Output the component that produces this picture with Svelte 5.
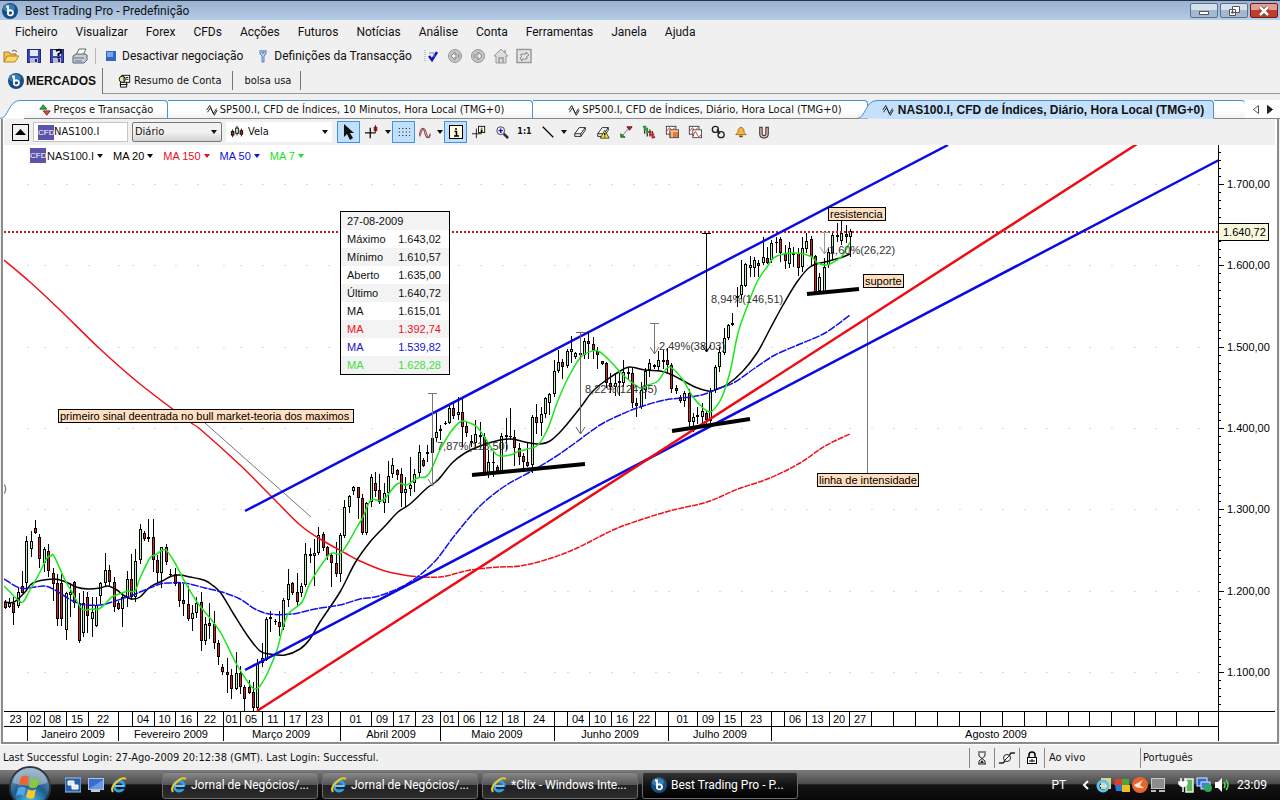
<script lang="ts">
	const menus = ['Ficheiro', 'Visualizar', 'Forex', 'CFDs', 'Acções', 'Futuros', 'Notícias', 'Análise', 'Conta', 'Ferramentas', 'Janela', 'Ajuda'];

	const indicators = [
		{ label: 'MA 20', color: '#000' },
		{ label: 'MA 150', color: '#e8101c' },
		{ label: 'MA 50', color: '#1010d8' },
		{ label: 'MA 7', color: '#1ee01e' }
	];

	const quote = [
		{ name: 'Máximo', value: '1.643,02', color: '#111' },
		{ name: 'Mínimo', value: '1.610,57', color: '#111' },
		{ name: 'Aberto', value: '1.635,00', color: '#111' },
		{ name: 'Último', value: '1.640,72', color: '#111' },
		{ name: 'MA', value: '1.615,01', color: '#111' },
		{ name: 'MA', value: '1.392,74', color: '#f01020' },
		{ name: 'MA', value: '1.539,82', color: '#1414d0' },
		{ name: 'MA', value: '1.628,28', color: '#40e040' }
	];

	const tools = ['target', 'zoom', 'ratio', 'line', 'caret', 'eraser', 'eraseall', 'trend', 'candles', 'copy', 'template', 'chain', 'bell', 'magnet'];
	const tasks = ['Jornal de Negócios/...', 'Jornal de Negócios/...', '*Clix - Windows Inte...'];

	let timeframe = $state('Diário');
	let chartType = $state('Vela');
	let symbol = $state('NAS100.I');

	// high, body top, body bottom, low, rising
	const candles = [
		[600,602,608,609,0],[598,603,607,608,1],[597,603,613,625,0],[587,592,606,608,1],[571,586,593,593,0],
		[536,541,583,588,1],[531,541,549,557,1],[520,528,533,534,0],[534,537,559,568,0],[547,549,563,572,1],
		[544,551,571,577,0],[568,573,584,601,0],[574,583,619,626,0],[574,583,619,626,0],[592,593,630,640,1],
		[583,592,595,617,1],[581,582,603,608,0],[593,603,641,643,0],[591,603,633,637,1],[592,597,616,633,0],
		[597,612,619,637,1],[597,605,626,627,1],[582,583,596,604,1],[553,570,583,587,1],[565,570,582,587,0],
		[577,582,607,612,0],[601,603,609,610,0],[592,597,609,627,1],[571,579,597,607,1],[554,579,597,600,0],
		[549,561,597,602,1],[524,529,560,564,1],[531,533,539,541,0],[519,537,539,542,0],[519,537,560,572,0],
		[555,560,573,582,0],[547,547,573,588,1],[544,547,562,565,0],[569,574,575,577,1],[568,574,584,586,0],
		[582,583,601,607,0],[584,600,604,616,0],[586,604,619,621,0],[605,613,619,631,1],[597,603,613,618,1],
		[592,602,641,651,0],[617,624,641,645,1],[603,623,626,639,0],[611,624,643,649,0],[640,643,657,665,0],
		[664,667,672,675,0],[658,672,675,693,0],[669,675,689,699,0],[652,673,689,690,1],[666,673,687,694,0],
		[685,687,699,711,0],[680,687,693,694,0],[682,692,708,711,0],[659,663,708,711,1],[643,658,663,667,1],
		[617,619,660,661,1],[611,617,619,632,1],[619,621,622,625,0],[611,622,627,636,0],[598,600,627,630,1],
		[569,584,600,607,1],[582,583,593,595,0],[573,592,602,607,0],[583,586,593,597,1],[543,554,585,587,1],
		[548,554,556,563,1],[539,553,556,586,1],[527,535,553,555,1],[532,534,548,551,0],[546,547,556,560,0],
		[553,555,563,587,0],[542,563,574,577,0],[533,535,574,582,1],[500,507,536,538,1],[495,496,507,513,1],
		[486,487,491,495,1],[487,487,498,519,0],[494,498,533,535,0],[502,503,533,535,1],[474,477,502,507,1],
		[472,483,491,497,0],[474,490,502,504,0],[483,493,503,513,1],[461,476,493,503,1],[458,465,474,478,1],
		[469,470,475,480,0],[468,474,493,507,0],[477,489,493,507,1],[457,485,489,496,1],[469,474,483,492,1],
		[445,452,473,477,1],[458,460,466,467,0],[445,452,454,462,1],[423,438,453,462,1],[413,432,438,442,1],
		[425,429,431,440,1],[421,423,424,425,0],[405,408,423,424,1],[402,408,416,419,0],[397,412,415,420,1],
		[397,412,427,447,0],[422,426,433,437,0],[435,441,443,447,0],[420,434,443,450,1],[422,435,437,448,0],
		[433,437,473,476,0],[450,462,473,478,1],[452,462,463,477,0],[465,467,471,473,0],[433,436,472,473,1],
		[418,435,437,450,1],[408,436,437,440,0],[430,437,448,466,0],[443,448,457,465,0],[453,456,462,468,0],
		[443,462,466,467,0],[415,417,465,473,1],[404,417,423,434,0],[407,414,423,436,1],[397,398,414,418,1],
		[393,394,403,415,1],[360,371,394,397,1],[350,362,371,373,1],[359,362,367,379,0],[349,351,366,368,1],
		[336,349,352,363,1],[352,353,357,359,1],[332,353,355,373,0],[338,341,355,359,1],[333,341,344,359,0],
		[337,344,350,359,0],[347,351,355,369,0],[361,361,364,365,0],[362,363,383,388,0],[373,383,387,393,0],
		[373,383,387,396,1],[373,381,383,396,1],[360,372,383,387,1],[368,372,374,379,0],[368,373,403,408,0],
		[398,403,406,417,0],[382,390,407,409,1],[368,371,390,399,1],[359,363,370,377,1],[364,365,367,369,0],
		[351,360,367,370,1],[350,360,362,369,1],[348,360,365,373,0],[363,365,389,393,0],[385,388,391,394,0],
		[395,397,401,403,0],[391,393,401,407,1],[389,393,422,427,0],[413,417,422,432,1],[407,415,417,424,1],
		[403,411,417,426,1],[411,413,420,428,0],[388,391,421,424,1],[365,367,390,393,1],[347,352,367,372,1],
		[328,338,353,355,1],[324,325,338,340,1],[313,323,325,326,0],[287,296,298,307,1],[260,285,295,299,1],
		[263,264,286,287,1],[256,265,268,277,1],[257,260,268,277,1],[260,263,266,277,0],[237,257,263,265,1],
		[247,258,263,264,0],[240,243,260,263,1],[237,242,243,253,1],[237,239,253,262,0],[245,254,261,269,0],
		[242,248,264,268,1],[247,253,255,267,0],[248,253,268,276,0],[237,248,267,272,1],[233,241,249,253,1],
		[236,239,257,265,0],[255,256,293,295,0],[273,277,291,293,1],[258,267,292,293,1],[247,252,265,268,1],
		[232,235,253,260,1],[223,235,237,242,0],[221,233,241,245,1],[225,234,237,243,0],[229,231,237,257,1]
	];
	const candleX = (i: number) => Math.round(4.6 + i * 4.357);

	const averages = [
		{ color: '#f01018', dash: '', points: '4,260 30,282 60,310 100,349 140,384 190,422 200,429 240,465 270,495 300,525 320,539 345,553 360,561 385,571 410,576' },
		{ color: '#f01018', dash: '6 1', points: '410,576 440,577 470,570 500,567 520,566 545,560 575,549 613,530 640,520 673,510 707,502 738,489 770,478 800,463 825,446 850,434' },
		{ color: '#000', dash: '', points: '4,602 14,602 25,592 33,583 53,579 66,582 76,587 88,589 100,588 108,586 117,590 123,595 132,599 140,597 150,587 162,581 172,576 180,575 190,577 200,579 208,582 220,592 233,613 247,635 260,651 270,654 285,655 300,649 310,639 320,622 340,592 355,563 370,542 385,526 398,512 410,504 427,488 438,480 452,463 465,453 480,446 500,440 512,439 525,442 540,444 550,441 562,430 580,408 592,392 605,381 622,370 630,367 645,370 660,371 670,374 680,379 695,387 708,391 715,390 728,384 743,371 757,353 770,329 783,305 797,282 810,267 825,262 840,258 850,254' },
		{ color: '#1010e8', dash: '8 1', points: '4,579 20,588 35,587 45,586 55,590 66,597 80,604 100,605 115,601 130,596 145,590 160,584 170,583 185,583 205,588 222,592 240,599 255,609 270,614 292,614 315,609 340,605 360,599 375,597 390,592 405,585 420,575 437,559 455,535 480,506 505,486 530,472 555,457 575,443 600,425 620,415 640,407 665,400 690,397 705,394 720,388 735,382 755,368 775,355 800,344 825,333 850,315' },
		{ color: '#18e818', dash: '', points: '4,586 12,594 18,600 23,602 30,590 40,572 47,558 51,556 54,556 65,580 72,592 82,609 92,609 99,609 107,602 112,597 122,593 128,591 135,591 140,578 150,558 155,555 163,550 167,551 175,563 185,582 197,602 213,622 222,635 237,665 250,685 255,689 260,686 268,672 277,650 283,627 289,613 302,602 310,583 327,557 333,553 340,554 348,543 357,527 363,517 371,500 383,500 397,484 407,485 417,478 428,475 440,450 450,433 460,422 467,422 477,427 485,438 497,455 510,455 517,452 527,449 538,445 548,428 557,403 567,380 580,358 592,351 600,352 612,363 623,375 640,388 648,385 658,381 667,368 673,369 683,380 693,397 703,408 710,412 715,408 722,397 730,372 738,333 747,307 757,282 767,267 775,257 793,253 810,256 818,263 827,265 837,260 843,255 850,242' }
	];

	// Rounded curve through every point of the list
	function curve(list: string) {
		const pts = list.split(' ').map((p) => p.split(',').map(Number));
		let d = `M${pts[0][0]} ${pts[0][1]}`;
		for (let i = 0; i < pts.length - 1; i++) {
			const a = pts[i - 1] ?? pts[i];
			const b = pts[i];
			const c = pts[i + 1];
			const e = pts[i + 2] ?? c;
			d += `C${b[0] + (c[0] - a[0]) / 6} ${b[1] + (c[1] - a[1]) / 6} ${c[0] - (e[0] - b[0]) / 6} ${c[1] - (e[1] - b[1]) / 6} ${c[0]} ${c[1]}`;
		}
		return d;
	}

	// Left edge of each week cell with its label, the last edge closes the row
	const weeks: [number, string][] = [
		[4, '23'], [27, '02'], [44, '08'], [66, '15'], [88, '22'], [118, ''], [132, '04'], [154, '10'], [175, '16'], [197, '22'],
		[223, '01'], [240, '05'], [262, '11'], [284, '17'], [306, '23'], [328, ''], [340, '01'], [371, '09'], [393, '17'], [415, '23'],
		[440, '01'], [458, '06'], [480, '12'], [502, '18'], [524, '24'], [554, ''], [567, '04'], [589, '10'], [611, '16'], [633, '22'],
		[655, ''], [668, '01'], [697, '09'], [719, '15'], [741, '23'], [771, ''], [784, '06'], [806, '13'], [829, '20'], [849, '27'],
		[871, ''], [893, ''], [915, ''], [937, ''], [959, ''], [980, ''], [1002, ''], [1024, ''], [1046, ''], [1068, ''],
		[1089, ''], [1111, ''], [1134, ''], [1155, ''], [1176, ''], [1198, ''], [1218, '']
	];
	const months: [number, number, string][] = [
		[27, 73, 'Janeiro 2009'], [118, 171, 'Fevereiro 2009'], [223, 281, 'Março 2009'], [340, 391, 'Abril 2009'],
		[440, 497, 'Maio 2009'], [554, 610, 'Junho 2009'], [668, 720, 'Julho 2009'], [771, 996, 'Agosto 2009']
	];

	const prices = ['1.700,00', '1.600,00', '1.500,00', '1.400,00', '1.300,00', '1.200,00', '1.100,00'];
	const priceY = (i: number) => Math.round(184 + i * 81.3);
	const minorTicks = Array.from({ length: 69 }, (_, i) => Math.round(151.5 + i * 8.13));

	const trends = [
		{ x1: 245, y1: 511, x2: 948, y2: 145, color: '#0a0ae6' },
		{ x1: 245, y1: 670, x2: 1219, y2: 160, color: '#0a0ae6' },
		{ x1: 257, y1: 711, x2: 1137, y2: 144, color: '#ee0c14' }
	];
	const supports = [
		[472, 475, 585, 464],
		[672, 431, 750, 419],
		[807, 294, 859, 289]
	];
	const measures = [
		{ x: 432, y1: 393, y2: 486, color: '#777', label: '7,87%(113,50)', ty: 450 },
		{ x: 580, y1: 332, y2: 434, color: '#666', label: '8,22%(124,65)', ty: 393 },
		{ x: 654, y1: 323, y2: 354, color: '#777', label: '2,49%(38,03)', ty: 350 },
		{ x: 706, y1: 233, y2: 352, color: '#000', label: '8,94%(146,51)', ty: 303 },
		{ x: 824, y1: 232, y2: 254, color: '#999', label: '1,60%(26,22)', ty: 254 }
	];
	const notes = [
		{ x: 58, y: 409, w: 296, text: 'primeiro sinal deentrada no bull market-teoria dos maximos' },
		{ x: 828, y: 207, w: 58, text: 'resistencia' },
		{ x: 863, y: 274, w: 41, text: 'suporte' },
		{ x: 817, y: 473, w: 102, text: 'linha de intensidade' }
	];
</script>

{#snippet icon(name: string, size = 16)}
	<svg class="icon" width={size} height={size} viewBox="0 0 16 16" fill="none" aria-hidden="true">
		{#if name === 'brand'}
			<circle cx="8" cy="8" r="8" fill="#164f83" />
			<ellipse cx="7" cy="5" rx="6" ry="4" fill="#3b7bb0" />
			<path d="M4 3.500h2V12M6 8.500c1-2 5-1.600 5 1.200S7 13.500 6 11" stroke="#fff" stroke-width="1.800" />
		{:else if name === 'open'}
			<path d="M1 14V4h5l1 2h6v3" fill="#f4c65a" stroke="#a87818" />
			<path d="M1 14l3-6h12l-4 6z" fill="#ffd868" stroke="#b58420" />
			<path d="M9 3q3-2 5 1" stroke="#555" />
		{:else if name === 'save' || name === 'saveas'}
			<rect x="1.500" y="1.500" width="13" height="13" fill="#3c48b4" stroke="#20287c" />
			<rect x="4" y="2" width="8" height="6" fill="#e4e8f8" />
			<rect x="4" y="10" width="8" height="5" fill="#b8bcd8" />
			<rect x="9" y="11" width="2" height="3" fill="#20287c" />
			{#if name === 'saveas'}
				<path d="M7 3q5-3 5 1 0 1-2.500 2v2M9.500 9v1.500" stroke="#000" stroke-width="2" />
			{/if}
		{:else if name === 'print'}
			<path d="M4 7l3-6h7l-3 6" fill="#fff" stroke="#666" />
			<path d="M1 8l3-2h9l2 1v5l-3 3H1z" fill="#c4ccd6" stroke="#5c6470" />
			<path d="M2 10h10M3 13h7" stroke="#6c7480" />
		{:else if name === 'stop'}
			<rect x="3" y="3" width="10" height="10" fill="#2f67c4" />
			<rect x="4" y="4" width="6" height="5" fill="#79a5e8" />
		{:else if name === 'wrench'}
			<path d="M5 2v4l2 2v6h2V8l2-2V2M7 2v3h2V2" fill="#b4d0f4" stroke="#5582bc" />
		{:else if name === 'check'}
			<path d="M1 2v12" stroke="#999" stroke-dasharray="1 1" />
			<path d="M5 8l3 4 5-8" stroke="#1414c8" stroke-width="2.500" />
			<path d="M5 5h5v4" stroke="#7888b0" />
		{:else if name === 'back' || name === 'forward'}
			<circle cx="8" cy="8" r="6.500" fill="#c4c4c4" stroke="#999" />
			<path d={name === 'back' ? 'M12 7H8V4L4 8l4 4V9h4z' : 'M4 7h4V4l4 4-4 4V9H4z'} fill="#eee" stroke="#888" />
		{:else if name === 'home'}
			<path d="M1 8l7-7 7 7h-2v7H3V8z" fill="#ddd" stroke="#999" />
			<path d="M6 15v-5h4v5M12 2v3" stroke="#999" stroke-width="1.500" />
		{:else if name === 'refresh'}
			<rect x="1" y="1.500" width="14" height="13" fill="#e4e4e4" stroke="#999" stroke-width="1.500" />
			<path d="M5 8V6h5V4l3 3-3 2M11 9v2H6v2l-2-3 2-2" stroke="#888" />
		{:else if name === 'account'}
			<rect x="5.500" y="1.500" width="9" height="8" fill="#fff" stroke="#000" />
			<circle cx="6" cy="6" r="3.500" fill="#ece8a0" stroke="#000" />
			<path d="M4 9v6h7V9M3 12h9M8 3v5M10 4h3M10 6h3" stroke="#000" />
		{:else if name === 'updown'}
			<path d="M2 7l4-5 4 5z" fill="#2fb52f" stroke="#17601a" />
			<path d="M6 9h8l-4 5z" fill="#e04848" stroke="#7c1c1c" />
		{:else if name === 'pulse'}
			<path d="M1 8l4-6 5 11 4-7M2 11l4-6 5 10 4-7" stroke="#222" stroke-width="1.300" />
		{:else if name === 'candle'}
			<path d="M3 5v9M8 1v11M13 4v9" stroke="#000" />
			<rect x="1.500" y="7.500" width="3" height="4" fill="#b22" stroke="#000" />
			<rect x="6.500" y="3.500" width="3" height="6" fill="#cfc" stroke="#000" />
			<rect x="11.500" y="6.500" width="3" height="4" fill="#b22" stroke="#000" />
		{:else if name === 'cursor'}
			<path d="M3 0v13l3-3 3 6 3-2-3-5h4z" fill="#111" />
		{:else if name === 'cross'}
			<path d="M6 3v12M0 9h12" stroke="#111" stroke-width="1.500" />
			<rect x="10.500" y="2.500" width="3" height="4" fill="#c22" stroke="#611" />
			<path d="M12 0v9" stroke="#611" />
		{:else if name === 'grid'}
			<path d="M2 4h13M2 8h13M2 12h13" stroke="#222" stroke-width="1.300" stroke-dasharray="1.300 2.700" />
		{:else if name === 'wave'}
			<path d="M0 12Q4-4 7 8T14 9" stroke="#c03040" stroke-width="1.300" />
			<path d="M1 13Q6-4 9 8t5 3" stroke="#444" />
		{:else if name === 'info'}
			<rect x="1.500" y="1.500" width="13" height="13" fill="#ffffe0" stroke="#000" />
			<path d="M8 4v2M6.500 7.500H8.500V12M6 12h5" stroke="#000" stroke-width="1.500" />
		{:else if name === 'target'}
			<path d="M5 4v11M0 10h11" stroke="#111" />
			<rect x="7.500" y="1.500" width="7" height="7" fill="#ffffe0" stroke="#000" />
			<path d="M11 3v1M11 5v3" stroke="#000" stroke-width="2" />
		{:else if name === 'zoom'}
			<circle cx="6.500" cy="6.500" r="4.500" fill="#eef" stroke="#333" />
			<path d="M4 6.500h5M6.500 4v5" stroke="#11c" stroke-width="1.500" />
			<path d="M10 10l5 5" stroke="#333" stroke-width="3" />
		{:else if name === 'line'}
			<path d="M2 2l12 12" stroke="#000" stroke-width="1.500" />
		{:else if name === 'eraser' || name === 'eraseall'}
			<path d="M2 10l5-7h7l-5 7zM2 10v3h7l5-7V3M9 10v3" fill="#fff" stroke="#111" />
			{#if name === 'eraseall'}
				<path d="M10 6l-5 9h10z" fill="#ffe840" stroke="#333" />
				<path d="M10 9v3M10 13v1" stroke="#000" stroke-width="1.500" />
			{/if}
		{:else if name === 'trend'}
			<path d="M4 12l8-9" stroke="#222" stroke-dasharray="2 1" />
			<path d="M2 10v4h5z" fill="#2b9a35" stroke="#186020" />
			<path d="M9 2h6l-3 4z" fill="#c22" stroke="#611" />
		{:else if name === 'candles'}
			<path d="M3 1v9M6 3v10M9 5v8M12 7v8" stroke="#333" stroke-width="1.500" />
			<path d="M1 2h4M2 5h5M5 8h4" stroke="#2b9a35" stroke-width="2.500" />
			<path d="M8 8h3M9 11h5M11 14h4" stroke="#c22" stroke-width="2.500" />
		{:else if name === 'copy' || name === 'template'}
			<rect x="1.500" y="1.500" width="11" height="9" fill="#fff" stroke="#333" />
			<path d="M2 7l3-4 3 4 3-4" stroke="#c22" />
			<rect x="5.500" y="5.500" width="10" height="9" fill={name === 'copy' ? '#df7c35' : '#fff'} stroke="#444" />
			{#if name === 'copy'}
				<path d="M6 7h9M8 8v6" stroke="#f4c090" stroke-width="2" />
			{:else}
				<path d="M6 13Q8 4 10 10t5 1" stroke="#c22" />
			{/if}
		{:else if name === 'chain'}
			<circle cx="5" cy="5" r="3.500" stroke="#222" stroke-width="1.500" />
			<circle cx="11.500" cy="11" r="3.500" stroke="#222" stroke-width="1.500" />
			<path d="M7 5l3 5" stroke="#222" stroke-width="2" />
		{:else if name === 'bell'}
			<path d="M2 11q3-2 3-6 3-5 6 0 0 4 3 6z" fill="#f4b43c" stroke="#a46810" />
			<path d="M6 13h4" stroke="#704808" stroke-width="2" />
		{:else if name === 'magnet'}
			<path d="M4.500 2v8q0 3.500 3.500 3.500t3.500-3.500V2" stroke="#333" stroke-width="4" />
			<path d="M4.500 3v7q0 3.500 3.500 3.500t3.500-3.500V3" stroke="#f0c0b8" stroke-width="1.500" />
		{:else if name === 'hourglass'}
			<path d="M4 2h8M4 14h8M5 3v3l6 5v3M11 3v3L5 11v3" stroke="#222" />
			<path d="M6 13l2-3 2 3z" fill="#222" />
		{:else if name === 'plug'}
			<path d="M0 13h4l3-3M9 7l3-4h4" stroke="#222" stroke-width="1.500" />
			<circle cx="8" cy="8" r="3.500" fill="#fff" stroke="#222" />
			<path d="M5 11l6-6" stroke="#222" />
		{:else if name === 'lock'}
			<path d="M5 7V5q0-3 3-3t3 3v2" stroke="#000" stroke-width="1.500" />
			<rect x="3.500" y="7.500" width="9" height="6" fill="#fff" stroke="#000" />
			<path d="M5 11h6M8 9v3" stroke="#000" />
		{:else if name === 'windows'}
			<rect width="16" height="14" y="1" fill="#2860a8" stroke="#9cc0ec" />
			<path d="M3 4h6v4H3zM7 8h6v4H7z" fill="#dcebff" stroke="#fff" />
		{:else if name === 'desktop'}
			<rect x=".5" y="1.500" width="15" height="11" fill="#3a6fce" stroke="#a8c4ec" />
			<path d="M1 12L15 3v9z" fill="#6b9ae4" />
			<path d="M3 14h9" stroke="#ccc" stroke-width="2" />
		{:else if name === 'ie'}
			<circle cx="8" cy="9" r="5" stroke="#2ba3ec" stroke-width="3" />
			<path d="M4 9h9" stroke="#6cc8ff" stroke-width="2" />
			<path d="M10 11h5" stroke="#123" stroke-width="2" />
			<path d="M2 15C-2 10 10-1 15 2" stroke="#f6c628" stroke-width="2" />
		{:else if name === 'globe'}
			<rect x="5" y="1" width="10" height="11" fill="#e4d48c" />
			<circle cx="7" cy="9" r="5" stroke="#5cc4ee" stroke-width="3" />
			<path d="M4 9h7" stroke="#bdeaff" stroke-width="2" />
		{:else if name === 'shield'}
			<path d="M1 2h7v6H0z" fill="#e43c24" /><path d="M8 2h7v6H8z" fill="#46a83c" />
			<path d="M1 8h7v6H2z" fill="#2878d8" /><path d="M8 8h8v7H8z" fill="#f0bc20" />
		{:else if name === 'flame'}
			<circle cx="8" cy="8" r="8" fill="#e8642c" />
			<path d="M2 8l9-5-3 5 4 3q-7 1-10-3z" fill="#ffe4cc" />
		{:else if name === 'monitor'}
			<rect x="1.500" y="1.500" width="13" height="10" fill="#8c8c8c" stroke="#c8c8c8" />
			<path d="M1 14h5M9 14h6" stroke="#bbb" stroke-width="2" />
		{:else if name === 'power'}
			<rect x="8" y="2" width="7" height="13" fill="#5cb85c" stroke="#e8f4e8" stroke-width="1.500" />
			<path d="M3 1v4M7 1v4M1 5h8v2q-4 5-8 0zM5 9v6" fill="#fff" stroke="#fff" stroke-width="1.500" />
		{:else if name === 'network'}
			<rect x="1" y="1" width="10" height="8" fill="#2c6cd8" stroke="#e0ecff" />
			<rect x="5" y="5" width="9" height="7" fill="#3f7fe8" stroke="#e0ecff" />
			<circle cx="12" cy="11" r="4" fill="#2fa862" />
		{:else if name === 'volume'}
			<path d="M1 5h3l4-4v14l-4-4H1z" fill="#fff" />
			<path d="M10 5q2 3 0 6M12 3q4 5 0 10" stroke="#58d858" stroke-width="1.500" />
		{/if}
	</svg>
{/snippet}

<svelte:head>
	<title>Best Trading Pro - Predefinição</title>
</svelte:head>

<div class="app">
	<header class="titlebar">
		{@render icon('brand')}
		<h1>Best Trading Pro - Predefinição</h1>
		<div class="window-buttons">
			<button type="button" aria-label="Minimizar">
				<svg width="12" height="10" viewBox="0 0 12 10"><rect x="1.500" y="5.500" width="9" height="3" fill="#fff" stroke="#555" /></svg>
			</button>
			<button type="button" aria-label="Restaurar">
				<svg width="12" height="10" viewBox="0 0 12 10"><path d="M4.500.5h7v6h-7zM1.500 3.500h6v6h-6z" fill="#fff" stroke="#555" /><path d="M3.500 6h2v1h-2z" stroke="#555" /></svg>
			</button>
			<button type="button" class="close" aria-label="Fechar">
				<svg width="12" height="10" viewBox="0 0 12 10"><path d="M2 1l8 8M10 1L2 9" stroke="#633" stroke-width="4" /><path d="M2 1l8 8M10 1L2 9" stroke="#fff" stroke-width="2.500" /></svg>
			</button>
		</div>
	</header>

	<nav class="menubar">
		{#each menus as menu}
			<button type="button">{menu}</button>
		{/each}
	</nav>

	<div class="toolbar">
		<button type="button" aria-label="Abrir">{@render icon('open')}</button>
		<button type="button" aria-label="Guardar">{@render icon('save')}</button>
		<button type="button" aria-label="Guardar como">{@render icon('saveas')}</button>
		<button type="button" aria-label="Imprimir">{@render icon('print')}</button>
		<span class="sep"></span>
		<button type="button" class="wide">{@render icon('stop')}Desactivar negociação</button>
		<button type="button" class="wide">{@render icon('wrench')}Definições da Transacção</button>
		<button type="button" aria-label="Confirmar">{@render icon('check')}</button>
		<button type="button" aria-label="Anterior">{@render icon('back')}</button>
		<button type="button" aria-label="Seguinte">{@render icon('forward')}</button>
		<button type="button" aria-label="Início">{@render icon('home')}</button>
		<button type="button" aria-label="Actualizar">{@render icon('refresh')}</button>
	</div>

	<div class="page-tabs">
		<button type="button" class="current">{@render icon('brand')}MERCADOS</button>
		<button type="button" class="account">{@render icon('account', 14)}Resumo de Conta</button>
		<button type="button">bolsa usa</button>
	</div>

	<div class="chart-tabs">
		<button type="button" class="first">
			<svg class="slant" width="24" height="19" viewBox="0 0 24 19"><path d="M0 18.500C9 18 8 .5 20 .5h4v18z" fill="#fff" /><path d="M0 18.500C9 18 8 .5 20 .5h4" fill="none" stroke="#4a8fd4" /></svg>
			{@render icon('updown', 14)}Preços e Transacção
		</button>
		<button type="button">{@render icon('pulse', 12)}SP500.I, CFD de Índices, 10 Minutos, Hora Local (TMG+0)</button>
		<button type="button">{@render icon('pulse', 12)}SP500.I, CFD de Índices, Diário, Hora Local (TMG+0)</button>
		<button type="button" class="active">
			<svg class="slant" width="24" height="19" viewBox="0 0 24 19"><path d="M0 18.500C9 18 8 .5 20 .5h4v18z" fill="#c4e0fa" /><path d="M0 18.500C9 18 8 .5 20 .5h4" fill="none" stroke="#4a8fd4" /></svg>
			{@render icon('pulse', 12)}NAS100.I, CFD de Índices, Diário, Hora Local (TMG+0)
		</button>
		<span class="blank"></span>
		<span class="scroll">
			<button type="button" aria-label="Separador anterior"><svg width="6" height="9" viewBox="0 0 6 9"><path d="M5.500.5v8l-5-4z" fill="#fff" stroke="#555" /></svg></button>
			<button type="button" aria-label="Separador seguinte"><svg width="6" height="9" viewBox="0 0 6 9"><path d="M.5.5v8l5-4z" fill="#222" stroke="#222" /></svg></button>
		</span>
	</div>

	<main class="panel">
		<div class="chart-toolbar">
			<button type="button" class="collapse" aria-label="Recolher">
				<svg width="11" height="6" viewBox="0 0 11 6"><path d="M0 6l5.500-6L11 6z" fill="#000" /></svg>
			</button>
			<label class="symbol">
				<span class="cfd">CFD</span>
				<input type="text" bind:value={symbol} aria-label="Símbolo" />
			</label>
			<label class="pick frame">
				<select bind:value={timeframe} aria-label="Período">
					<option>Diário</option>
					<option>Semanal</option>
				</select>
				<i class="down"></i>
			</label>
			<label class="pick style">
				{@render icon('candle', 14)}
				<select bind:value={chartType} aria-label="Tipo de gráfico">
					<option>Vela</option>
					<option>Linha</option>
				</select>
				<i class="down"></i>
			</label>
			<div class="tools">
				<button type="button" class="on" aria-label="Cursor">{@render icon('cursor')}</button>
				<button type="button" aria-label="Mira">{@render icon('cross', 14)}</button>
				<button type="button" class="more" aria-label="Opções da mira"><i class="down"></i></button>
				<button type="button" class="on" aria-label="Grelha">{@render icon('grid', 14)}</button>
				<button type="button" class="wave" aria-label="Indicadores">{@render icon('wave', 13)}</button>
				<button type="button" class="more" aria-label="Opções de indicadores"><i class="down"></i></button>
				<button type="button" class="on" aria-label="Informação">{@render icon('info')}</button>
				{#each tools as tool}
					{#if tool === 'caret'}
						<button type="button" class="more" aria-label="Opções de linha"><i class="down"></i></button>
					{:else if tool === 'ratio'}
						<button type="button" class="ratio">1:1</button>
					{:else}
						<button type="button" aria-label={tool}>{@render icon(tool, 14)}</button>
					{/if}
				{/each}
			</div>
		</div>

		<div class="chart">
			<svg class="plot" viewBox="4 145 1271 597" role="img" aria-label="NAS100.I, Diário">
				<!-- Grid dots -->
				{#each prices as _, row}
					{#each weeks.slice(1, -1) as [x]}
						<rect x={x} y={priceY(row)} width="2" height="1" fill="#dadada" />
					{/each}
				{/each}

				<!-- Notes pointing at the chart -->
				<path d="M205 423L311 517M867.500 317V473" stroke="#777" />

				{#each candles as [high, top, bottom, low, up], i}
					<rect x={candleX(i)} y={high} width="1" height={low - high} fill="#000" />
					<rect x={candleX(i) - 1} y={top} width="3" height={Math.max(bottom - top, 1)} fill="#000" />
					<rect x={candleX(i)} y={top + 1} width="1" height={Math.max(bottom - top - 2, 0)} fill={up ? '#b4f4b4' : '#e02020'} />
				{/each}

				{#each averages as line}
					<path d={curve(line.points)} fill="none" stroke={line.color} stroke-width="1.500" stroke-dasharray={line.dash} />
				{/each}

				<path d="M4 232H1218" stroke="#b81828" stroke-width="2" stroke-dasharray="2 2" />

				{#each trends as t}
					<line x1={t.x1} y1={t.y1} x2={t.x2} y2={t.y2} stroke={t.color} stroke-width="2.500" />
				{/each}
				{#each supports as [x1, y1, x2, y2]}
					<line {x1} {y1} {x2} {y2} stroke="#000" stroke-width="4" />
				{/each}

				{#each measures as m}
					<path d="M{m.x - 4} {m.y1}.5h9M{m.x}.5 {m.y1}V{m.y2}M{m.x - 4} {m.y2 - 7}l4.500 7 4.500-7" fill="none" stroke={m.color} />
					<text x={m.x + 5} y={m.ty} class="measure">{m.label}</text>
				{/each}

				{#each notes as note}
					<rect x={note.x + 0.5} y={note.y + 0.5} width={note.w - 1} height="13" fill="#ffdfc0" stroke="#000" />
					<text x={note.x + 2} y={note.y + 11}>{note.text}</text>
				{/each}
				<text x="3" y="492" fill="#555">)</text>

				<!-- Price axis -->
				<g shape-rendering="crispEdges">
					<path d="M1218.500 145V741M4 711.500H1275M4 726.500H1218" stroke="#000" />
					{#each minorTicks as y}
						<rect x="1219" {y} width="2" height="1" />
					{/each}
					{#each prices as _, i}
						<rect x="1219" y={priceY(i)} width="5" height="1" />
					{/each}
					{#each weeks.slice(1) as [x]}
						<rect {x} y="712" width="1" height="15" />
					{/each}
					{#each months as [x]}
						<rect {x} y="727" width="1" height="14" />
					{/each}
				</g>
				{#each prices as price, i}
					<text x="1227" y={priceY(i) + 4}>{price}</text>
				{/each}
				<rect x="1218.500" y="223.500" width="50" height="17" fill="#f8f8dc" stroke="#000" />
				<text x="1223" y="236">1.640,72</text>

				<!-- Date axis -->
				{#each weeks as [x, label], i}
					{#if label}
						<text x={(x + weeks[i + 1][0]) / 2} y="723" text-anchor="middle">{label}</text>
					{/if}
				{/each}
				{#each months as [, x, label]}
					<text {x} y="738" text-anchor="middle">{label}</text>
				{/each}
			</svg>

			<div class="legend">
				<span class="cfd">CFD</span>
				<button type="button" class="name">NAS100.I <i class="down"></i></button>
				{#each indicators as ind}
					<button type="button" style:color={ind.color}>{ind.label} <i class="down"></i></button>
				{/each}
			</div>

			<table class="quote">
				<thead>
					<tr><th colspan="2">27-08-2009</th></tr>
				</thead>
				<tbody>
					{#each quote as row}
						<tr style:color={row.color}>
							<td>{row.name}</td>
							<td class="value">{row.value}</td>
						</tr>
					{/each}
				</tbody>
			</table>
		</div>
	</main>

	<footer class="status">
		<span class="login">Last Successful Login: 27-Ago-2009 20:12:38 (GMT). Last Login: Successful.</span>
		<span class="cell">{@render icon('hourglass')}</span>
		<span class="cell">{@render icon('plug')}</span>
		<span class="cell">{@render icon('lock')}</span>
		<span class="cell live">Ao vivo</span>
		<span class="cell lang">Português</span>
	</footer>

	<div class="taskbar">
		<button type="button" class="start" aria-label="Iniciar">
			<svg width="42" height="42" viewBox="0 0 42 42">
				<defs>
					<radialGradient id="orb" cx=".5" cy=".9" r=".9">
						<stop offset="0" stop-color="#4cc8ec" />
						<stop offset=".5" stop-color="#1c5c8c" />
						<stop offset="1" stop-color="#8aa4b8" />
					</radialGradient>
				</defs>
				<circle cx="21" cy="21" r="20" fill="url(#orb)" stroke="#2a3a48" stroke-width="2" />
				<path d="M4 17a17 15 0 0 1 34 0q-17 6-34 0z" fill="#c8d8e4" opacity=".5" />
				<path d="M12 11q4-3 8 0l-2 9q-4-3-8 0z" fill="#f0642c" />
				<path d="M22 12q4 3 9 0l-3 9q-4 2-8 0z" fill="#8cc83c" />
				<path d="M9 22q4-3 8 0l-2 8q-4-3-8 0z" fill="#50a8ec" />
				<path d="M19 23q4 3 8 0l-2 9q-4 2-8-1z" fill="#fcc830" />
			</svg>
		</button>
		<div class="quick">
			<button type="button" aria-label="Alternar janelas">{@render icon('windows')}</button>
			<button type="button" aria-label="Ambiente de trabalho">{@render icon('desktop')}</button>
			<button type="button" aria-label="Internet Explorer">{@render icon('ie')}</button>
		</div>
		<div class="tasks">
			{#each tasks as task}
				<button type="button">{@render icon('ie')}{task}</button>
			{/each}
			<button type="button" class="current">{@render icon('brand')}Best Trading Pro - P...</button>
		</div>
		<div class="tray">
			<span class="pt">PT</span>
			<svg class="expand" width="7" height="10" viewBox="0 0 7 10"><path d="M6 1L2 5l4 4" fill="none" stroke="#fff" stroke-width="2" /></svg>
			{@render icon('globe')}
			{@render icon('shield')}
			{@render icon('flame')}
			{@render icon('monitor')}
			<span class="group">
				{@render icon('power')}
				{@render icon('network')}
				{@render icon('volume')}
			</span>
			<time>23:09</time>
		</div>
	</div>
</div>

<style>
	:global(body) {
		background: #f0f0f0;
	}

	.app {
		display: flex;
		flex-direction: column;
		min-height: 100vh;
		overflow: hidden;
		font: 11px/14px "DejaVu Sans Condensed", "Noto Sans", sans-serif;
		color: #111;
	}

	button {
		display: flex;
		align-items: center;
		justify-content: center;
		padding: 0;
		border: 0;
		background: none;
		font: inherit;
		color: inherit;
		white-space: nowrap;
	}

	.icon {
		flex-shrink: 0;
	}

	.titlebar {
		display: flex;
		align-items: center;
		gap: 7px;
		height: 20px;
		box-sizing: border-box;
		padding: 0 2px;
		border-top: 1px solid #26344c;
		background: linear-gradient(#9ab2d0, #b4cce6);
	}

	.titlebar h1 {
		flex: 1;
		margin: 0;
		font: 12px/16px Roboto, sans-serif;
	}

	.window-buttons {
		display: flex;
		gap: 2px;
	}

	.window-buttons button {
		width: 28px;
		height: 15px;
		border: 1px solid #5c7088;
		border-radius: 2px;
		background: linear-gradient(#d4e0ee 50%, #a4b8d0 50%);
	}

	.window-buttons .close {
		border-color: #701c1c;
		background: linear-gradient(#e0a090 50%, #c03c2c 50%);
	}

	.menubar {
		display: flex;
		gap: 18px;
		height: 24px;
		padding-left: 15px;
		font: 12px/16px Roboto, sans-serif;
	}

	.toolbar {
		display: flex;
		align-items: center;
		gap: 7px;
		height: 24px;
		padding-left: 3px;
		font: 12px/16px Roboto, sans-serif;
	}

	.sep {
		width: 1px;
		height: 16px;
		background: #b8b8b8;
	}

	.wide {
		gap: 3px;
		margin-right: 5px;
	}

	.page-tabs {
		display: flex;
		height: 25px;
		border-bottom: 1px solid #999;
	}

	.page-tabs button {
		gap: 3px;
		margin: 3px 0;
		padding: 0 9px 0 11px;
		border-right: 1px solid #777;
	}

	.page-tabs .account {
		padding: 0 11px 0 14px;
	}

	.page-tabs .current {
		gap: 2px;
		margin: 0 0 -1px;
		padding: 0 6px 0 8px;
		background: #f0f0f0;
		font: bold 12px/16px "Liberation Sans", sans-serif;
	}

	.chart-tabs {
		display: grid;
		grid-template-columns: 168fr 365fr 335fr 346fr 31fr 35fr;
		height: 19px;
		padding-top: 6px;
	}

	.chart-tabs > button,
	.blank {
		position: relative;
		box-sizing: border-box;
		gap: 2px;
		border-top: 1px solid #4a8fd4;
		border-right: 1px solid #4a8fd4;
		border-bottom: 1px solid #888;
		border-radius: 0 4px 0 0;
		background: linear-gradient(#fff 50%, #f2f2f2);
	}

	.chart-tabs > button:nth-child(2),
	.chart-tabs > button:nth-child(3) {
		padding-left: 10px;
	}

	.chart-tabs .first {
		margin-left: 24px;
	}

	.chart-tabs .active {
		margin-left: 13px;
		padding-right: 8px;
		gap: 4px;
		border-bottom-color: #c4e0fa;
		background: #c4e0fa;
		font: bold 12px/14px "Liberation Sans", sans-serif;
	}

	.slant {
		position: absolute;
		right: 100%;
		top: -1px;
	}

	.blank {
		border-right: 0;
	}

	.scroll {
		display: flex;
		align-items: center;
		justify-content: center;
		gap: 8px;
		background: #fff;
		border-bottom: 1px solid #888;
	}

	.panel {
		flex: 1;
		margin: 0 1px;
		padding: 0 2px 0 1px;
		border: 2px solid #8c8c8c;
		border-top: 0;
		background: #fff;
	}

	.chart-toolbar {
		display: flex;
		align-items: center;
		gap: 4px;
		height: 26px;
		padding-left: 8px;
		background: #f0f0f0;
	}

	.collapse {
		width: 17px;
		height: 17px;
		border: 1px solid #000;
	}

	.symbol {
		display: flex;
		align-items: center;
		width: 95px;
		height: 20px;
		box-sizing: border-box;
		padding-left: 4px;
		border: 1px solid #c4c4c4;
		background: #fff;
	}

	.symbol input {
		flex: 1;
		min-width: 0;
		padding: 0;
		border: 0;
		font: inherit;
		color: inherit;
	}

	.cfd {
		flex-shrink: 0;
		width: 16px;
		height: 15px;
		background: #5c54a8;
		font: 8px/15px "Liberation Sans", sans-serif;
		text-align: center;
		color: #fff;
	}

	.pick {
		display: flex;
		align-items: center;
		gap: 4px;
		height: 20px;
		box-sizing: border-box;
		padding: 0 4px;
		background: #fff;
	}

	.pick select {
		flex: 1;
		appearance: none;
		padding: 0;
		border: 0;
		outline: 0;
		background: none;
		font: inherit;
		color: inherit;
	}

	.frame {
		width: 90px;
		padding-left: 2px;
		border: 1px solid #777;
		border-radius: 2px;
		background: linear-gradient(#f2f2f2 50%, #d4d4d4);
	}

	.style {
		width: 106px;
	}

	.down {
		flex-shrink: 0;
		border: 3px solid transparent;
		border-top: 4px solid currentColor;
		border-bottom: 0;
	}

	.tools {
		display: flex;
		margin-left: 1px;
	}

	.tools button {
		width: 23px;
		height: 22px;
		box-sizing: border-box;
	}

	.tools .more {
		width: 9px;
	}

	.tools .wave {
		width: 20px;
	}

	.tools .on {
		border: 1px solid #3c94e4;
		background: #c2e0fc;
	}

	.tools .ratio {
		font: bold 8px/12px "DejaVu Sans", sans-serif;
	}

	.chart {
		position: relative;
	}

	.plot {
		display: block;
		width: 100%;
		font: 11px "Liberation Sans", sans-serif;
	}

	.measure {
		fill: #333;
	}

	.legend {
		position: absolute;
		left: 26px;
		top: 3px;
		display: flex;
		align-items: center;
		gap: 10px;
		font: 11px/14px "Liberation Sans", sans-serif;
	}

	.legend button {
		gap: 3px;
	}

	.legend .name {
		margin-left: -9px;
	}

	.quote {
		position: absolute;
		left: 336px;
		top: 66px;
		width: 110px;
		border: 1px solid #000;
		border-collapse: separate;
		border-spacing: 0;
		background: #fff;
		font: 11px/18px "Liberation Sans", sans-serif;
	}

	.quote th,
	.quote td {
		padding: 0 6px;
		text-align: left;
		font-weight: normal;
	}

	.quote .value {
		padding-right: 8px;
		text-align: right;
	}

	.quote th,
	.quote tbody tr:nth-child(even) {
		background: #f3f3f3;
	}

	.status {
		display: flex;
		align-items: center;
		height: 25px;
		border-top: 1px solid #fff;
		background: #f0f0f0;
	}

	.login {
		flex: 1;
		padding-left: 3px;
	}

	.cell {
		display: flex;
		align-items: center;
		justify-content: center;
		width: 24px;
		height: 20px;
		border-left: 1px solid #888;
	}

	.cell.live,
	.cell.lang {
		box-sizing: border-box;
		justify-content: flex-start;
		width: 96px;
		padding-left: 4px;
	}

	.cell.lang {
		width: 140px;
		padding-left: 2px;
	}

	.taskbar {
		display: flex;
		align-items: center;
		height: 30px;
		background: linear-gradient(#7c7c7c, #4c4c4c 45%, #141414 50%, #080808);
		font: 12px/16px Roboto, sans-serif;
		color: #fff;
	}

	.start {
		height: 30px;
		margin-left: 9px;
		padding-top: 4px;
		box-sizing: border-box;
	}

	.start svg {
		flex-shrink: 0;
		overflow: visible;
	}

	.quick {
		display: flex;
		gap: 7px;
		margin-left: 14px;
	}

	.tasks {
		display: flex;
		gap: 4px;
		margin-left: 35px;
	}

	.tasks button {
		justify-content: flex-start;
		gap: 4px;
		width: 156px;
		height: 27px;
		padding-left: 8px;
		border: 1px solid #6c6c6c;
		border-radius: 3px;
		background: linear-gradient(#888, #555 48%, #222 50%, #2c2c2c);
	}

	.tasks .current {
		background: linear-gradient(#333, #111 50%, #000);
	}

	.tray {
		display: flex;
		align-items: center;
		gap: 2px;
		margin-left: auto;
		padding-right: 13px;
	}

	.pt {
		margin-right: 14px;
	}

	.expand {
		margin-right: 5px;
	}

	.group {
		display: flex;
		gap: 2px;
		margin: 0 5px 0 10px;
	}
</style>
